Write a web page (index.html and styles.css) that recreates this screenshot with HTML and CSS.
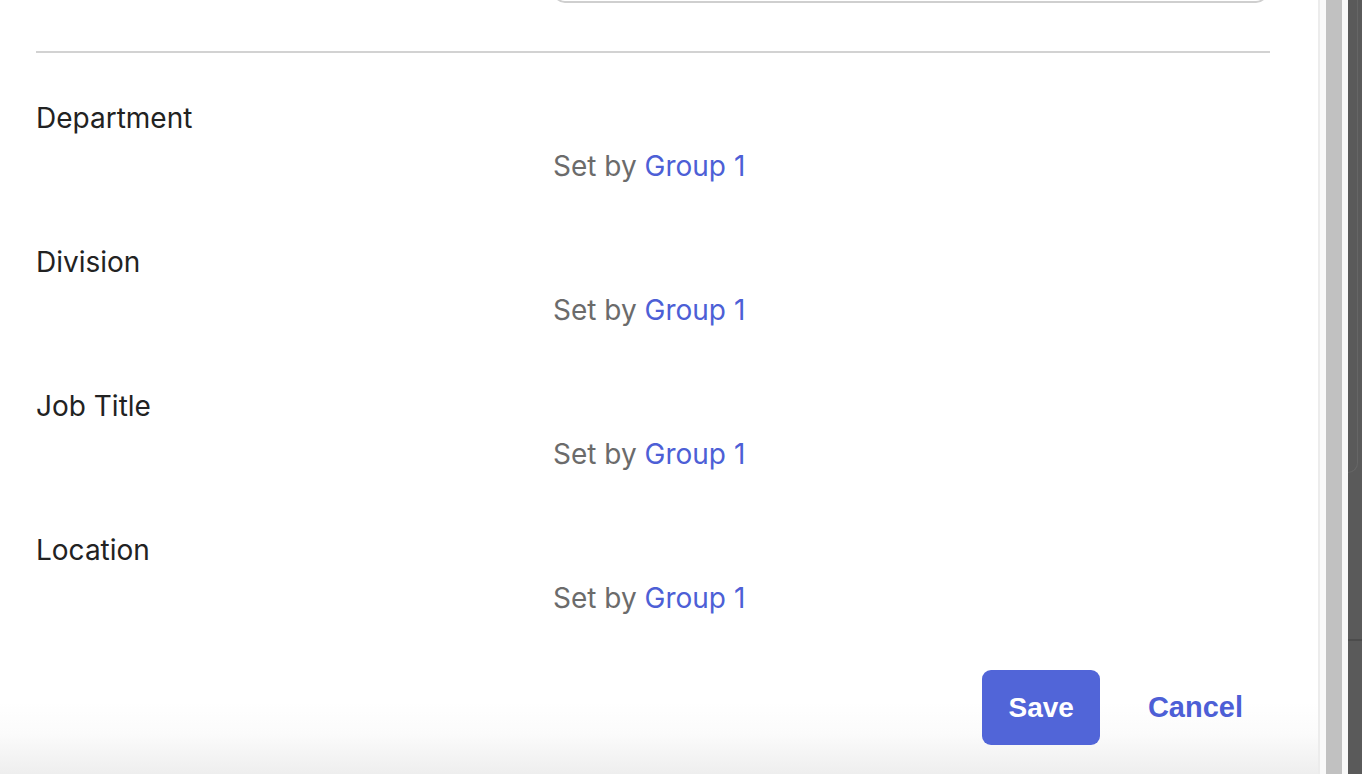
FILE: index.html
```html
<!DOCTYPE html>
<html lang="en">
<head>
    <meta charset="UTF-8">
    <meta name="viewport" content="width=device-width, initial-scale=1.0">
    <title>Edit Profile</title>
    <link rel="stylesheet" href="styles.css">
</head>
<body>

    <div class="panel">
        <!-- input cut off by the scroll position -->
        <div class="top-field">
            <div class="top-input"></div>
        </div>

        <hr class="divider">

        <div class="field">
            <div class="field-label">Department</div>
            <div class="field-value">Set by <a href="#" class="group-link">Group 1</a></div>
        </div>
        <div class="field">
            <div class="field-label">Division</div>
            <div class="field-value">Set by <a href="#" class="group-link">Group 1</a></div>
        </div>
        <div class="field">
            <div class="field-label">Job Title</div>
            <div class="field-value">Set by <a href="#" class="group-link">Group 1</a></div>
        </div>
        <div class="field">
            <div class="field-label">Location</div>
            <div class="field-value">Set by <a href="#" class="group-link">Group 1</a></div>
        </div>

        <div class="actions">
            <button class="btn btn-primary">Save</button>
            <button class="btn btn-link">Cancel</button>
        </div>
    </div>

    <div class="panel-edge"></div>
    <div class="scrollbar">
        <div class="scroll-thumb"></div>
    </div>

    <div class="backdrop">
        <div class="backdrop-card"></div>
        <div class="backdrop-line"></div>
    </div>

</body>
</html>
```

FILE: styles.css
```css
body {
    display: flex;
    height: 100vh;
    margin: 0;
    overflow: hidden;
    font-family: 'Inter', 'Noto Sans', sans-serif;
    background-color: #5a5a5a;
}

.panel {
    width: 1234px;
    padding: 0 48px 0 36px;
    background: linear-gradient(#ffffff calc(100% - 72px), #fbfbfb calc(100% - 40px), #eeeeee);
    display: flex;
    flex-direction: column;
}

.top-field {
    display: grid;
    grid-template-columns: 517px 1fr;
    margin-top: -49px;
}

.top-input {
    grid-column: 2;
    height: 48px;
    margin-right: 2px;
    border: 2px solid #cfcfcf;
    border-radius: 12px;
}

.divider {
    margin: 48px 0 0;
    border: none;
    border-top: 2px solid #d2d2d2;
}

.field {
    display: grid;
    grid-template-columns: 517px 1fr;
    row-gap: 12px;
    margin-top: 47px;
    font-size: 28px;
    line-height: 36px;
}

.field + .field {
    margin-top: 60px;
}

.field-label {
    grid-column: 1;
    grid-row: 1;
    color: #222222;
}

.field-value {
    grid-column: 2;
    grid-row: 2;
    color: #6b6b6b;
}

.group-link {
    color: #4d5fd6;
    text-decoration: none;
}

.actions {
    display: flex;
    justify-content: flex-end;
    gap: 21px;
    margin-top: 54px;
}

.btn {
    height: 75px;
    padding: 0 26px;
    border: none;
    border-radius: 9px;
    font-family: 'Liberation Sans', Arial, sans-serif;
    font-size: 28px;
    font-weight: bold;
    cursor: pointer;
}

.btn-primary {
    background-color: #5165d8;
    color: #ffffff;
}

.btn-link {
    padding-left: 27px;
    padding-right: 27px;
    background: transparent;
    color: #4d5fd6;
    font-size: 29px;
}

.panel-edge {
    width: 2px;
    background-color: #ececec;
}

.scrollbar {
    width: 16px;
    padding: 0 6px;
    background-color: #f9f9f9;
}

.scroll-thumb {
    height: 100%;
    background-color: #c1c1c1;
}

.backdrop {
    flex: 1;
    display: flex;
    flex-direction: column;
}

.backdrop-card {
    height: 472px;
    width: 9px;
    border-right: 1px solid #666666;
    border-bottom: 1px solid #666666;
    border-bottom-right-radius: 10px;
}

.backdrop-line {
    margin-top: 166px;
    height: 2px;
    background-color: #4c4c4c;
}
```
